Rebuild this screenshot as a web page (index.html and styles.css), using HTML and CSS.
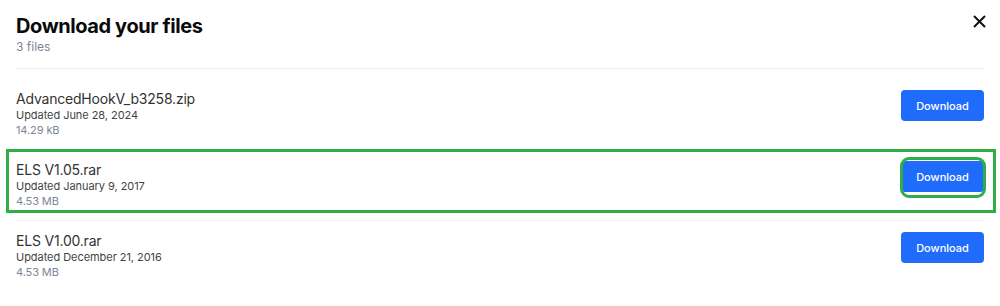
FILE: index.html
```html
<!DOCTYPE html>
<html>
<head>
<meta charset="utf-8">
<link rel="stylesheet" href="styles.css">
</head>
<body>
<div class="modal">
  <header class="head">
    <div>
      <h1 class="title">Download your files</h1>
      <div class="count">3 files</div>
    </div>
    <button class="close" aria-label="Close">
      <svg width="13" height="13" viewBox="0 0 13 13"><path d="M1 1L12 12M12 1L1 12" stroke="#111" stroke-width="2" fill="none"/></svg>
    </button>
  </header>
  <ul class="list">
    <li class="row">
      <div class="info">
        <div class="name">AdvancedHookV_b3258.zip</div>
        <div class="date">Updated June 28, 2024</div>
        <div class="size">14.29 kB</div>
      </div>
      <button class="btn">Download</button>
    </li>
    <li class="row hl">
      <div class="info">
        <div class="name">ELS V1.05.rar</div>
        <div class="date">Updated January 9, 2017</div>
        <div class="size">4.53 MB</div>
      </div>
      <button class="btn btn-hl">Download</button>
    </li>
    <li class="row">
      <div class="info">
        <div class="name">ELS V1.00.rar</div>
        <div class="date">Updated December 21, 2016</div>
        <div class="size">4.53 MB</div>
      </div>
      <button class="btn">Download</button>
    </li>
  </ul>
</div>
</body>
</html>
```
FILE: styles.css
```css
* { box-sizing: border-box; }
html, body { margin: 0; padding: 0; background: #fff; }
body { font-family: Inter, "Noto Sans", sans-serif; color: #1f1f1f; }
.modal { width: 1000px; padding: 0 16px; }
.head { display: flex; justify-content: space-between; align-items: flex-start; padding-top: 14px; padding-bottom: 14px; border-bottom: 1px solid #ededed; margin-bottom: 10px; }
.title { margin: 0; font-size: 20px; line-height: 24px; font-weight: 700; color: #0a0a0a; letter-spacing: -0.4px; }
.count { font-size: 12px; line-height: 15px; color: #7d8696; margin-top: 1px; }
.close { background: none; border: 0; padding: 0; margin-top: 1px; margin-right: -2px; width: 13px; height: 13px; cursor: pointer; display: flex; }
.list { list-style: none; margin: 0; padding: 0; }
.row { display: flex; justify-content: space-between; align-items: flex-start; padding: 11px 0; border-bottom: 1px solid #f2f2f2; position: relative; }
.row:last-child { border-bottom: 0; }
.name { font-size: 14px; line-height: 17px; color: #333; letter-spacing: -0.2px; }
.date { font-size: 11px; line-height: 16px; color: #444; letter-spacing: -0.05px; }
.size { font-size: 11px; line-height: 15px; color: #7d8696; letter-spacing: -0.1px; }
.btn { width: 83px; height: 31px; border: 0; border-radius: 4px; background: #1f6cfc; color: #fff; font-family: Inter, sans-serif; font-size: 11px; font-weight: 500; position: relative; padding: 0; }
.hl::after { content: ""; position: absolute; left: -10px; right: -12px; top: -1px; bottom: 7px; border: 3px solid #2fae48; pointer-events: none; }
.btn-hl::after { content: ""; position: absolute; left: -1px; right: -2px; top: -4px; bottom: -6px; border: 3px solid #2fae48; border-radius: 9px; }
```
